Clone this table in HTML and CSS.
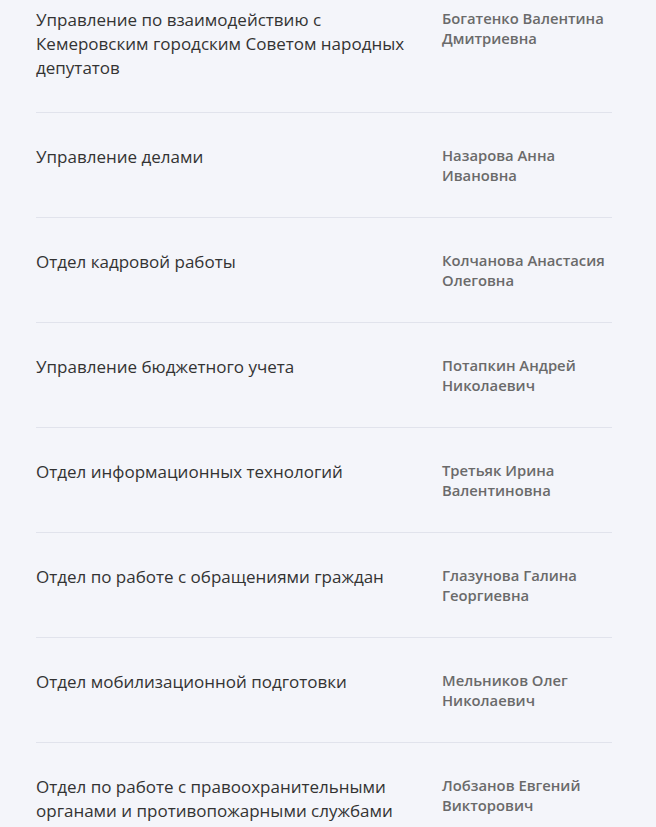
FILE: index.html
```html
<!DOCTYPE html>
<html lang="ru">
<head>
<meta charset="utf-8">
<link rel="stylesheet" href="styles.css">
</head>
<body>
<div class="list">
  <div class="row first">
    <div class="dept">Управление по взаимодействию с Кемеровским городским Советом народных депутатов</div>
    <div class="head">Богатенко Валентина Дмитриевна</div>
  </div>
  <div class="row">
    <div class="dept">Управление делами</div>
    <div class="head">Назарова Анна Ивановна</div>
  </div>
  <div class="row">
    <div class="dept">Отдел кадровой работы</div>
    <div class="head">Колчанова Анастасия Олеговна</div>
  </div>
  <div class="row">
    <div class="dept">Управление бюджетного учета</div>
    <div class="head">Потапкин Андрей Николаевич</div>
  </div>
  <div class="row">
    <div class="dept">Отдел информационных технологий</div>
    <div class="head">Третьяк Ирина Валентиновна</div>
  </div>
  <div class="row">
    <div class="dept">Отдел по работе с обращениями граждан</div>
    <div class="head">Глазунова Галина Георгиевна</div>
  </div>
  <div class="row">
    <div class="dept">Отдел мобилизационной подготовки</div>
    <div class="head">Мельников Олег Николаевич</div>
  </div>
  <div class="row">
    <div class="dept">Отдел по работе с правоохранительными органами и противопожарными службами</div>
    <div class="head">Лобзанов Евгений Викторович</div>
  </div>
</div>
</body>
</html>
```
FILE: styles.css
```css
html, body {
  margin: 0;
  padding: 0;
  background: #f4f5fa;
}
body {
  font-family: "Open Sans", "Noto Sans", sans-serif;
}
.list {
  margin: 0 44px 0 36px;
}
.row {
  display: grid;
  grid-template-columns: 385px 172px;
  column-gap: 21px;
  padding: 32px 0 32px;
  border-bottom: 1px solid #e1e3ec;
}
.row.first {
  padding-top: 8px;
}
.dept {
  font-size: 17px;
  line-height: 24px;
  color: #333333;
}
.head {
  font-size: 14.8px;
  line-height: 20px;
  font-weight: 600;
  color: #6a6a6a;
}
```
